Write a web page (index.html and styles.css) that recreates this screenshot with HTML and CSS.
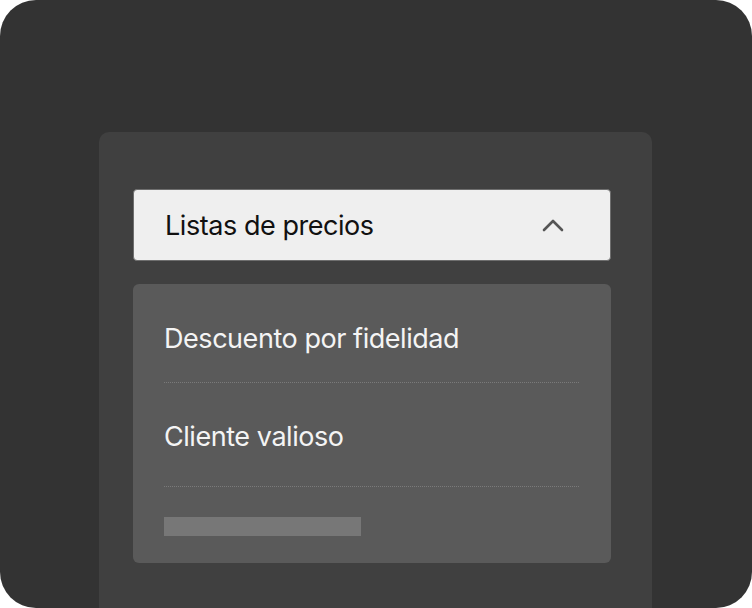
FILE: index.html
```html
<!DOCTYPE html>
<html lang="es">
<head>
    <meta charset="UTF-8">
    <meta name="viewport" content="width=device-width, initial-scale=1.0">
    <title>Listas de precios</title>
    <link rel="stylesheet" href="styles.css">
</head>
<body>
    <div class="frame">
        <div class="panel">
            <!-- Cabecera del desplegable -->
            <div class="select-header">
                <span class="select-title">Listas de precios</span>
                <svg class="chevron" width="22" height="14" viewBox="0 0 22 14">
                    <path d="M2 12 L11 3 L20 12" fill="none" stroke="#555" stroke-width="2.6" stroke-linecap="round" stroke-linejoin="round"/>
                </svg>
            </div>

            <!-- Opciones -->
            <ul class="option-list">
                <li class="option-item">Descuento por fidelidad</li>
                <li class="option-item">Cliente valioso</li>
                <li class="option-placeholder"><span class="placeholder-bar"></span></li>
            </ul>
        </div>
    </div>
</body>
</html>
```

FILE: styles.css
```css
* {
    margin: 0;
    padding: 0;
    box-sizing: border-box;
    font-family: Inter, 'Noto Sans', sans-serif;
}

body {
    background-color: #ffffff;
}

.frame {
    width: 752px;
    height: 608px;
    background-color: #333333;
    border-radius: 36px;
    padding: 132px 0 0 99px;
    overflow: hidden;
}

.panel {
    width: 553px;
    height: 100%;
    background-color: #404040;
    border-radius: 10px 10px 0 0;
    padding: 57px 41px 0 34px;
}

.select-header {
    height: 72px;
    background-color: #efefef;
    border: 1px solid #6e6e6e;
    border-radius: 4px;
    display: flex;
    justify-content: space-between;
    align-items: center;
    padding: 0 46px 0 31px;
}

.select-title {
    font-size: 27px;
    color: #111111;
    letter-spacing: -0.45px;
}

.chevron {
    display: block;
}

.option-list {
    list-style: none;
    margin-top: 23px;
    background-color: #5a5a5a;
    border-radius: 6px;
    padding: 0 32px 27px 31px;
}

.option-item {
    font-size: 27px;
    line-height: 30px;
    color: #f4f4f4;
    letter-spacing: -0.45px;
    padding: 40px 0 28px;
    border-bottom: 1px dotted #7a7a7a;
}

.option-item + .option-item {
    padding: 39px 0 34px;
}

.option-placeholder {
    padding-top: 30px;
}

.placeholder-bar {
    display: block;
    width: 197px;
    height: 19px;
    background-color: #777777;
}
```
